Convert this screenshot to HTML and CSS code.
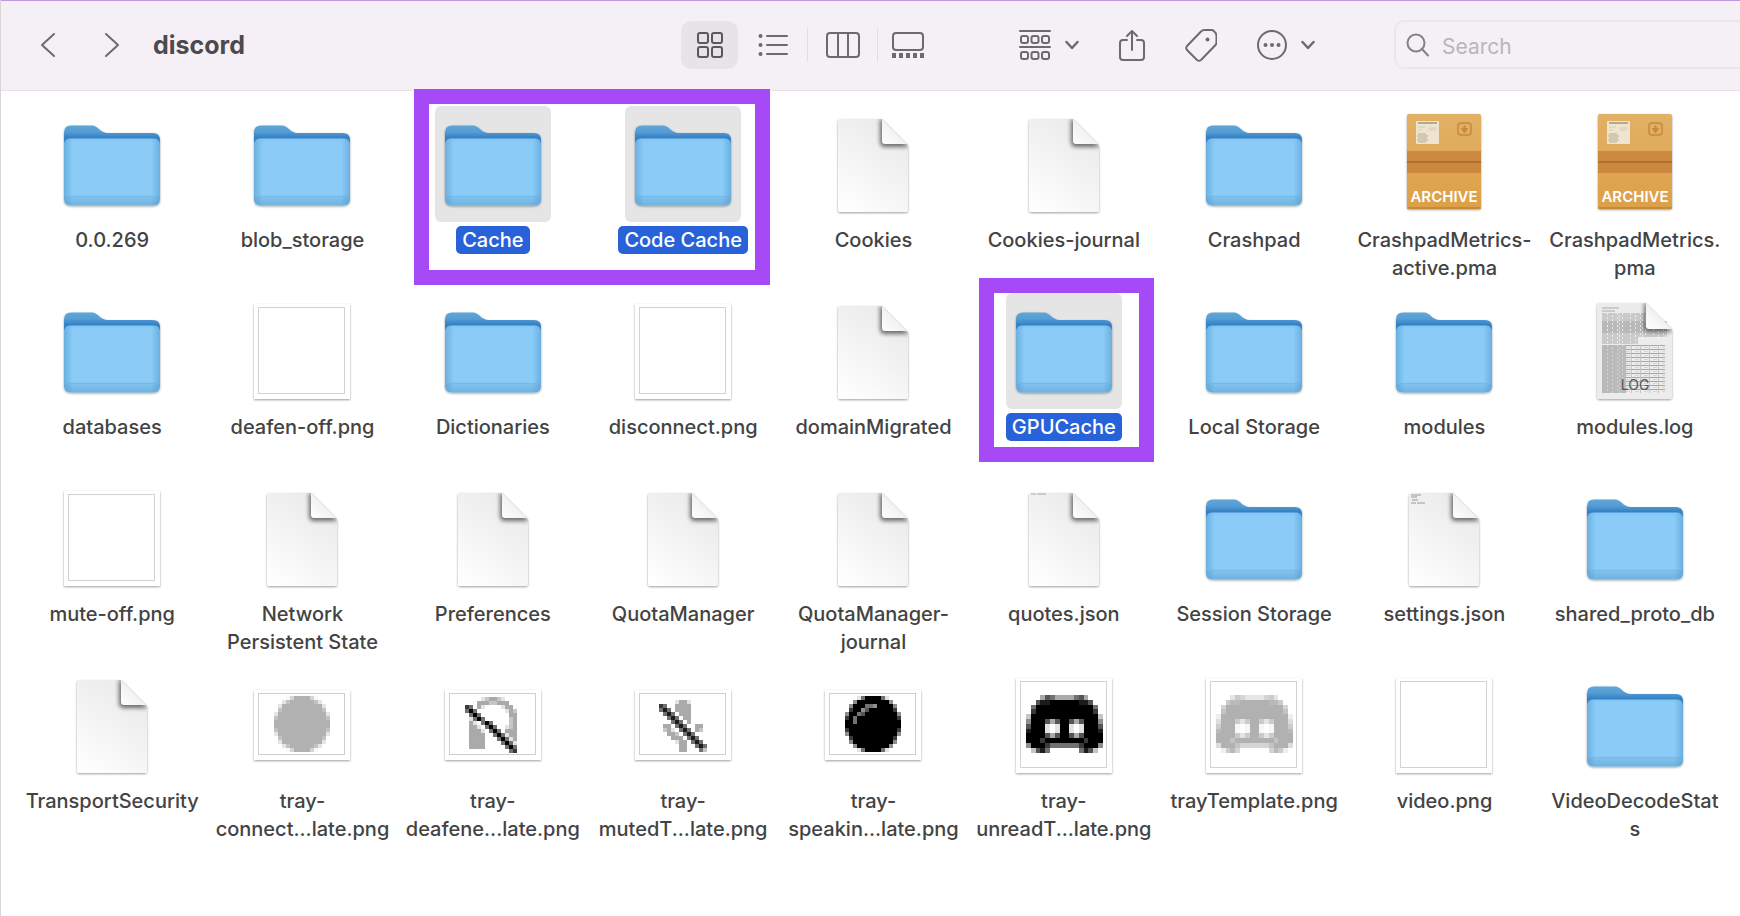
FILE: index.html
```html
<!DOCTYPE html>
<html lang="en">
<head>
    <meta charset="UTF-8">
    <meta name="viewport" content="width=device-width, initial-scale=1.0">
    <title>discord</title>
    <link rel="stylesheet" href="styles.css">
</head>
<body>
    <!-- Shared icons -->
    <svg class="defs" width="0" height="0" aria-hidden="true">
        <defs>
            <linearGradient id="folderBack" x1="0" y1="0" x2="0" y2="1">
                <stop offset="0" stop-color="#5fa6d8"/>
                <stop offset=".25" stop-color="#559dd3"/>
                <stop offset=".48" stop-color="#3580c6"/>
                <stop offset="1" stop-color="#3d88cb"/>
            </linearGradient>
            <linearGradient id="folderFront" x1="0" y1="0" x2="0" y2="1">
                <stop offset="0" stop-color="#84c6f2"/>
                <stop offset=".06" stop-color="#8accf7"/>
                <stop offset=".84" stop-color="#8accf7"/>
                <stop offset=".88" stop-color="#7fc1ec"/>
                <stop offset="1" stop-color="#6eb3e1"/>
            </linearGradient>
            <linearGradient id="folderSides" x1="0" y1="0" x2="1" y2="0">
                <stop offset="0" stop-color="#4a93cb" stop-opacity=".5"/>
                <stop offset=".09" stop-color="#4a93cb" stop-opacity="0"/>
                <stop offset=".91" stop-color="#4a93cb" stop-opacity="0"/>
                <stop offset="1" stop-color="#4a93cb" stop-opacity=".5"/>
            </linearGradient>
            <linearGradient id="paper" x1=".8" y1="0" x2=".2" y2="1">
                <stop offset="0" stop-color="#e9e9e9"/>
                <stop offset=".5" stop-color="#f3f3f3"/>
                <stop offset="1" stop-color="#fefefe"/>
            </linearGradient>
            <linearGradient id="fold" x1="0" y1="1" x2=".6" y2=".4">
                <stop offset="0" stop-color="#ffffff"/>
                <stop offset="1" stop-color="#ededed"/>
            </linearGradient>
            <linearGradient id="cardboard" x1="0" y1="0" x2="0" y2="1">
                <stop offset="0" stop-color="#e2b166"/>
                <stop offset="1" stop-color="#dca047"/>
            </linearGradient>
            <filter id="shadow" x="-20%" y="-20%" width="140%" height="140%">
                <feDropShadow dx="0" dy="1" stdDeviation="1" flood-color="#000" flood-opacity=".38"/>
            </filter>
            <filter id="soft" x="-40%" y="-40%" width="180%" height="180%">
                <feGaussianBlur stdDeviation="2"/>
            </filter>
            <pattern id="logLines" width="9" height="4" patternUnits="userSpaceOnUse">
                <rect width="9" height="1" fill="#a6a6a6"/>
                <rect width="1" height="4" fill="#c4c4c4"/>
                <rect x="4" y="2" width="4" height="1" fill="#d6d6d6"/>
            </pattern>
            <pattern id="logText" width="23" height="4" patternUnits="userSpaceOnUse">
                <path d="M0 1h7m1 0h9m1 0h4M0 3h12m1 0h6m1 0h3" stroke="#a8a8a8" stroke-width="1"/>
            </pattern>
            <clipPath id="paperClip">
                <path d="M25 13h42l26 26v65q0 2-2 2H25q-2 0-2-2V15q0-2 2-2z"/>
            </clipPath>
            <clipPath id="logClip">
                <path d="M22 10h47l26 26v67q0 3-3 3H23q-3 0-3-3V12q0-2 2-2z"/>
            </clipPath>
        </defs>

        <symbol id="folder" viewBox="0 0 116 116">
            <g filter="url(#shadow)">
                <path d="M10 40V26.500Q10 19.500 17 19.500H38C44 19.500 46 27 54 27H99Q106 27 106 34V45H10z" fill="url(#folderBack)"/>
                <path d="M10 40Q10 32.500 16 32.500H100Q106 32.500 106 40V92.500Q106 99.500 99 99.500H17Q10 99.500 10 92.500z" fill="url(#folderFront)"/>
            </g>
            <path d="M10 40Q10 32.500 16 32.500H100Q106 32.500 106 40V92.500Q106 99.500 99 99.500H17Q10 99.500 10 92.500z" fill="url(#folderSides)"/>
            <path d="M10.500 90.500h95" stroke="#74b6e2" opacity=".7"/>
        </symbol>

        <symbol id="file" viewBox="0 0 116 116">
            <g filter="url(#shadow)">
                <path d="M25 13h42l26 26v65q0 2-2 2H25q-2 0-2-2V15q0-2 2-2z" fill="url(#paper)"/>
            </g>
            <g clip-path="url(#paperClip)">
                <path d="M65 12v24q0 5 5 5h24L68 14z" fill="#000" opacity=".55" filter="url(#soft)"/>
                <path d="M67 11v24q0 3 3 3h24z" fill="url(#fold)"/>
            </g>
        </symbol>

        <symbol id="archive" viewBox="0 0 116 116">
            <rect x="21" y="8" width="74" height="95" rx="2" fill="url(#cardboard)" filter="url(#shadow)"/>
            <rect x="21" y="45" width="74" height="22" fill="#cb8940"/>
            <rect x="21" y="55" width="74" height="2" fill="#b27030"/>
            <rect x="21" y="101" width="74" height="2" rx="1" fill="#c58a3a"/>
            <rect x="30" y="15" width="23" height="23" rx="1" fill="#efe4cf"/>
            <path d="M32 17h19" stroke="#b7a88d" stroke-width="2"/>
            <path d="M32 21h7m3 1h9M32 24h4m7 0h7" stroke="#d8ccb5"/>
            <path d="M32 28h8M31 30h11M32 32h9M31 34h11M32 36h8" stroke="#b8ab92"/>
            <rect x="72" y="17" width="13" height="12" rx="3" fill="none" stroke="#c58a3e" stroke-width="1.500"/>
            <path d="M78.500 19.500v4M76.500 23h4l-2 3z" stroke="#c58a3e" stroke-width="2" fill="#c58a3e"/>
        </symbol>

        <symbol id="log" viewBox="0 0 116 116">
            <path d="M22 10h47l26 26v67q0 3-3 3H23q-3 0-3-3V12q0-2 2-2z" fill="#ececec" filter="url(#shadow)"/>
            <path d="M25 15h17M25 18h13" stroke="#aaa"/>
            <rect x="25" y="20" width="43" height="20" fill="url(#logText)"/>
            <rect x="25" y="28" width="65" height="16" fill="url(#logText)"/>
            <rect x="25" y="44" width="36" height="7" fill="url(#logText)"/>
            <rect x="25" y="52" width="24" height="48" fill="url(#logText)"/>
            <rect x="25" y="52" width="24" height="48" fill="#888" opacity=".25"/>
            <rect x="49" y="52" width="39" height="48" fill="url(#logLines)"/>
            <g clip-path="url(#logClip)">
                <path d="M67 9v25q0 5 5 5h24L70 11z" fill="#000" opacity=".5" filter="url(#soft)"/>
                <path d="M69 8v25q0 3 3 3h25z" fill="url(#fold)"/>
            </g>
        </symbol>

        <symbol id="picture" viewBox="0 0 116 116">
            <rect x="10" y="11" width="96" height="95" fill="#fff" filter="url(#shadow)"/>
            <rect x="10" y="11" width="96" height="95" fill="#fff"/>
            <rect x="14.500" y="14.500" width="86" height="86" fill="none" stroke="#d2d2d2"/>
        </symbol>

        <symbol id="picture-wide" viewBox="0 0 116 116">
            <rect x="10" y="23" width="96" height="70" fill="#fff" filter="url(#shadow)"/>
            <rect x="10" y="23" width="96" height="70" fill="#fff"/>
            <rect x="14.500" y="26.500" width="86" height="61" fill="none" stroke="#cfcfcf"/>
        </symbol>

        <symbol id="chevron" viewBox="0 0 14 10">
            <path d="M1.500 2l5.500 6 5.500-6" fill="none" stroke="currentColor" stroke-width="2.500" stroke-linecap="round" stroke-linejoin="round"/>
        </symbol>
    </svg>

    <header class="toolbar">
        <div class="nav">
            <button type="button" class="nav-btn" aria-label="Back">
                <svg width="16" height="26" viewBox="0 0 16 26"><path d="M14 2L2 13l12 11"/></svg>
            </button>
            <button type="button" class="nav-btn" aria-label="Forward">
                <svg width="16" height="26" viewBox="0 0 16 26"><path d="M2 2l12 11L2 24"/></svg>
            </button>
            <h1>discord</h1>
        </div>

        <div class="views">
            <button type="button" class="view-btn active" aria-label="Icons">
                <svg width="28" height="28" viewBox="0 0 28 28"><rect x="2" y="2" width="10" height="10" rx="2"/><rect x="16" y="2" width="10" height="10" rx="2"/><rect x="2" y="16" width="10" height="10" rx="2"/><rect x="16" y="16" width="10" height="10" rx="2"/></svg>
            </button>
            <button type="button" class="view-btn" aria-label="List">
                <svg width="30" height="24" viewBox="0 0 30 24"><path d="M9 3h20M9 12h20M9 21h20"/><path d="M2.500 3h.01M2.500 12h.01M2.500 21h.01" stroke-width="4"/></svg>
            </button>
            <span class="separator"></span>
            <button type="button" class="view-btn" aria-label="Columns">
                <svg width="34" height="28" viewBox="0 0 34 28"><rect x="1" y="2" width="32" height="24" rx="3"/><path d="M12 2v24M22 2v24"/></svg>
            </button>
            <span class="separator"></span>
            <button type="button" class="view-btn" aria-label="Gallery">
                <svg width="34" height="28" viewBox="0 0 34 28"><rect x="2" y="2" width="30" height="17" rx="3"/><path d="M1 24.500h32" stroke-width="5" stroke-dasharray="4 3" stroke-linecap="butt"/></svg>
            </button>
        </div>

        <div class="actions">
            <button type="button" class="action-btn" aria-label="Group">
                <svg width="32" height="32" viewBox="0 0 32 32"><path d="M1 2h30M1 18h30"/><rect x="2" y="7" width="7" height="7" rx="2"/><rect x="12.500" y="7" width="7" height="7" rx="2"/><rect x="23" y="7" width="7" height="7" rx="2"/><rect x="2" y="23" width="7" height="7" rx="2"/><rect x="12.500" y="23" width="7" height="7" rx="2"/><rect x="23" y="23" width="7" height="7" rx="2"/></svg>
                <svg width="14" height="10"><use href="#chevron"/></svg>
            </button>
            <button type="button" class="action-btn" aria-label="Share">
                <svg width="26" height="34" viewBox="0 0 26 34"><path d="M8 12H4q-3 0-3 3v14q0 3 3 3h18q3 0 3-3V15q0-3-3-3h-4M13 22V3M8 8l5-5 5 5"/></svg>
            </button>
            <button type="button" class="action-btn" aria-label="Tags">
                <svg width="32" height="34" viewBox="0 0 32 34"><path d="M19 2h7q2 0 3 1l1.500 2q1 1 1 3v6q0 2-1 3L16 32q-2 1.500-4 0L2 22q-1.500-2 0-4L16 3.500Q17.500 2 19 2z"/><path d="M22.500 11.500h.01" stroke-width="4"/></svg>
            </button>
            <button type="button" class="action-btn" aria-label="More">
                <svg width="30" height="30" viewBox="0 0 30 30"><circle cx="15" cy="15" r="14"/><path d="M8.500 15h.01M15 15h.01M21.500 15h.01" stroke-width="4"/></svg>
                <svg width="14" height="10"><use href="#chevron"/></svg>
            </button>
        </div>

        <label class="search">
            <svg width="24" height="24" viewBox="0 0 24 24"><circle cx="10" cy="10" r="8.500"/><path d="M16 16l6 6.500"/></svg>
            <input type="search" placeholder="Search" aria-label="Search">
        </label>
    </header>

    <main>
        <ul class="files">
            <li><svg class="icon"><use href="#folder"/></svg><span class="name">0.0.269</span></li>
            <li><svg class="icon"><use href="#folder"/></svg><span class="name">blob_storage</span></li>
            <li class="selected"><svg class="icon"><use href="#folder"/></svg><span class="name">Cache</span></li>
            <li class="selected"><svg class="icon"><use href="#folder"/></svg><span class="name">Code Cache</span></li>
            <li><svg class="icon"><use href="#file"/></svg><span class="name">Cookies</span></li>
            <li><svg class="icon"><use href="#file"/></svg><span class="name">Cookies-journal</span></li>
            <li><svg class="icon"><use href="#folder"/></svg><span class="name">Crashpad</span></li>
            <li><svg class="icon" viewBox="0 0 116 116"><use href="#archive"/><text x="58" y="96" text-anchor="middle" class="archive-label">ARCHIVE</text></svg><span class="name">CrashpadMetrics-<br>active.pma</span></li>
            <li><svg class="icon" viewBox="0 0 116 116"><use href="#archive"/><text x="58" y="96" text-anchor="middle" class="archive-label">ARCHIVE</text></svg><span class="name">CrashpadMetrics.<br>pma</span></li>

            <li><svg class="icon"><use href="#folder"/></svg><span class="name">databases</span></li>
            <li><svg class="icon"><use href="#picture"/></svg><span class="name">deafen-off.png</span></li>
            <li><svg class="icon"><use href="#folder"/></svg><span class="name">Dictionaries</span></li>
            <li><svg class="icon"><use href="#picture"/></svg><span class="name">disconnect.png</span></li>
            <li><svg class="icon"><use href="#file"/></svg><span class="name">domainMigrated</span></li>
            <li class="selected"><svg class="icon"><use href="#folder"/></svg><span class="name">GPUCache</span></li>
            <li><svg class="icon"><use href="#folder"/></svg><span class="name">Local Storage</span></li>
            <li><svg class="icon"><use href="#folder"/></svg><span class="name">modules</span></li>
            <li><svg class="icon" viewBox="0 0 116 116"><use href="#log"/><text x="58" y="97" text-anchor="middle" class="log-label">LOG</text></svg><span class="name">modules.log</span></li>

            <li><svg class="icon"><use href="#picture"/></svg><span class="name">mute-off.png</span></li>
            <li><svg class="icon"><use href="#file"/></svg><span class="name">Network<br>Persistent State</span></li>
            <li><svg class="icon"><use href="#file"/></svg><span class="name">Preferences</span></li>
            <li><svg class="icon"><use href="#file"/></svg><span class="name">QuotaManager</span></li>
            <li><svg class="icon"><use href="#file"/></svg><span class="name">QuotaManager-<br>journal</span></li>
            <li><svg class="icon" viewBox="0 0 116 116"><use href="#file"/><path d="M25 14h5m1 0h9" stroke="#aaa"/></svg><span class="name">quotes.json</span></li>
            <li><svg class="icon"><use href="#folder"/></svg><span class="name">Session Storage</span></li>
            <li><svg class="icon" viewBox="0 0 116 116"><use href="#file"/><path d="M25 15h10M25 17h6M26 20h6M25 23h5m1 0h8" stroke="#999"/></svg><span class="name">settings.json</span></li>
            <li><svg class="icon"><use href="#folder"/></svg><span class="name">shared_proto_db</span></li>

            <li><svg class="icon"><use href="#file"/></svg><span class="name">TransportSecurity</span></li>
            <li><svg class="icon" viewBox="0 0 116 116"><use href="#picture-wide"/><g class="faded" data-pixels="disc"></g></svg><span class="name">tray-<br>connect...late.png</span></li>
            <li><svg class="icon" viewBox="0 0 116 116"><use href="#picture-wide"/><g data-pixels="deafened"></g></svg><span class="name">tray-<br>deafene...late.png</span></li>
            <li><svg class="icon" viewBox="0 0 116 116"><use href="#picture-wide"/><g data-pixels="muted"></g></svg><span class="name">tray-<br>mutedT...late.png</span></li>
            <li><svg class="icon" viewBox="0 0 116 116"><use href="#picture-wide"/><g data-pixels="speaking"></g></svg><span class="name">tray-<br>speakin...late.png</span></li>
            <li><svg class="icon" viewBox="0 0 116 116"><use href="#picture"/><g data-pixels="logo"></g></svg><span class="name">tray-<br>unreadT...late.png</span></li>
            <li><svg class="icon" viewBox="0 0 116 116"><use href="#picture"/><g class="faded" data-pixels="logo"></g></svg><span class="name">trayTemplate.png</span></li>
            <li><svg class="icon"><use href="#picture"/></svg><span class="name">video.png</span></li>
            <li><svg class="icon"><use href="#folder"/></svg><span class="name">VideoDecodeStat<br>s</span></li>

            <!-- Frames around the cache folders -->
            <li class="frame frame-cache" aria-hidden="true"></li>
            <li class="frame frame-gpu" aria-hidden="true"></li>
        </ul>
    </main>

    <script src="pixels.js"></script>
</body>
</html>
```

FILE: styles.css
```css
* {
    box-sizing: border-box;
}
body {
    margin: 0;
    min-height: 100vh;
    font-family: Inter, "Liberation Sans", sans-serif;
    color: #434343;
    background-color: #fff;
    border-left: 1px solid #d9d6d9;
    overflow-x: hidden;
}
button {
    display: flex;
    align-items: center;
    justify-content: center;
    padding: 0;
    border: none;
    background: none;
    color: #6e696e;
    cursor: pointer;
}
.defs {
    position: absolute;
}

/* Toolbar */
.toolbar {
    display: flex;
    align-items: center;
    height: 91px;
    padding-bottom: 2px;
    background-color: #f5f0f5;
    border-top: 1px solid #c096e0;
    border-bottom: 1px solid #e6e2e6;
    overflow: hidden;
}
.toolbar svg {
    fill: none;
    stroke: currentColor;
    stroke-width: 2;
    stroke-linecap: round;
    stroke-linejoin: round;
}
.nav {
    display: flex;
    align-items: center;
    flex: 1 1 0;
    padding-left: 31px;
}
.nav-btn {
    width: 32px;
    height: 48px;
    margin-right: 32px;
}
.nav-btn + .nav-btn {
    margin-right: 25px;
}
.nav h1 {
    margin: 0;
    font-size: 25px;
    font-weight: 700;
    color: #4d494d;
}
.views {
    display: flex;
    align-items: center;
    gap: 6px;
}
.view-btn {
    width: 57px;
    height: 48px;
    border-radius: 10px;
}
.view-btn:last-child {
    width: 48px;
}
.view-btn.active {
    background-color: #e8e3e7;
    color: #5c575c;
}
.separator {
    width: 1px;
    height: 34px;
    background-color: #e3dee3;
}
.actions {
    display: flex;
    align-items: center;
    gap: 40px;
    margin: 0 79px 0 87px;
}
.action-btn {
    gap: 14px;
    height: 48px;
}
.search {
    display: flex;
    align-items: center;
    gap: 12px;
    width: 346px;
    height: 49px;
    padding-left: 10px;
    border: 2px solid #ebe6eb;
    border-right: none;
    border-radius: 10px 0 0 10px;
    color: #858085;
}
.search input {
    flex: 1;
    min-width: 0;
    padding: 4px 0 0;
    border: none;
    outline: none;
    background: none;
    font-family: inherit;
    font-size: 21px;
    color: #434343;
}
.search input::placeholder {
    color: #bab5ba;
    opacity: 1;
}

/* Files */
.files {
    position: relative;
    display: grid;
    grid-template-columns: repeat(9, minmax(0, 1fr));
    grid-auto-rows: 175px;
    row-gap: 12px;
    margin: 0;
    padding: 15px 10px 40px 16px;
    list-style: none;
}
.files li {
    display: flex;
    flex-direction: column;
    align-items: center;
    gap: 4px;
}
.icon {
    flex: none;
    width: 116px;
    height: 116px;
    border-radius: 6px;
}
.name {
    padding: 0 6px;
    border-radius: 5px;
    font-size: 20px;
    font-weight: 500;
    line-height: 28px;
    text-align: center;
    white-space: nowrap;
}
.selected .icon {
    background-color: #e5e5e5;
}
.selected .name {
    background-color: #2862d9;
    color: #fff;
}
.faded {
    opacity: 0.3;
}
.archive-label {
    font-size: 15px;
    font-weight: 600;
    fill: #fff;
}
.log-label {
    font-size: 14px;
    fill: #555;
}

/* Frames lie over the grid, each tied to the cells it surrounds */
.files .frame {
    position: absolute;
    border: 15px solid #a64af7;
    pointer-events: none;
}
.frame-cache {
    grid-area: 1 / 3 / 2 / 5;
    inset: -17px 8px -4px 16px;
}
.frame-gpu {
    grid-area: 2 / 6 / 3 / 7;
    inset: -15px 5px 6px 10px;
}
```

FILE: pixels.js
```javascript
// Each digit is the darkness of one pixel, 0 (clear) to 9 (black)
const pixelIcons = {
    disc: {
        x: 30, y: 29, size: 4,
        rows: [
            '00015999951000',
            '00379999997300',
            '03999999999930',
            '07999999999970',
            '39999999999993',
            '79999999999997',
            '99999999999999',
            '99999999999999',
            '79999999999997',
            '39999999999993',
            '07999999999970',
            '03999999999930',
            '00379999997300',
            '00015999951000'
        ]
    },
    speaking: {
        x: 30, y: 29, size: 4,
        rows: [
            '00015999951000',
            '00499999999400',
            '04999554999940',
            '07994699999970',
            '49956999999994',
            '79599999999997',
            '99599999999999',
            '99999999999999',
            '79999999999997',
            '49999999999994',
            '07999999999970',
            '04999999999940',
            '00499999999400',
            '00015999951000'
        ]
    },
    deafened: {
        x: 30, y: 30, size: 4,
        rows: [
            '0000123321000',
            '0003332233300',
            '7503100001330',
            '5950000000132',
            '0595000000033',
            '0159500000023',
            '0310595000023',
            '0331059500123',
            '0333105950333',
            '0333300595133',
            '0333300059513',
            '0333300005951',
            '0333300000595',
            '0000000000057'
        ]
    },
    muted: {
        x: 34, y: 33, size: 4,
        rows: [
            '000013310000',
            '750033330000',
            '585033330000',
            '058503330000',
            '005850330000',
            '000585030000',
            '033058500330',
            '023105850320',
            '003320585000',
            '000333058500',
            '000013305850',
            '000003300585',
            '000003300052'
        ]
    },
    logo: {
        x: 20, y: 28, size: 4.8,
        rows: [
            '0003653333563000',
            '0068899999988600',
            '0599999999999950',
            '0799999999999970',
            '2999999999999992',
            '4999636996369994',
            '6999101991019996',
            '8999101991019998',
            '9999636996369999',
            '9997999999997999',
            '4999755555579994',
            '0268500000058620'
        ]
    }
};

document.querySelectorAll('[data-pixels]').forEach(group => {
    const icon = pixelIcons[group.dataset.pixels];
    group.setAttribute('shape-rendering', 'crispEdges');
    icon.rows.forEach((row, y) => {
        [...row].forEach((level, x) => {
            if (level === '0') return;
            const rect = document.createElementNS('http://www.w3.org/2000/svg', 'rect');
            rect.setAttribute('x', icon.x + x * icon.size);
            rect.setAttribute('y', icon.y + y * icon.size);
            rect.setAttribute('width', icon.size);
            rect.setAttribute('height', icon.size);
            rect.setAttribute('fill-opacity', level / 9);
            group.appendChild(rect);
        });
    });
});
```
